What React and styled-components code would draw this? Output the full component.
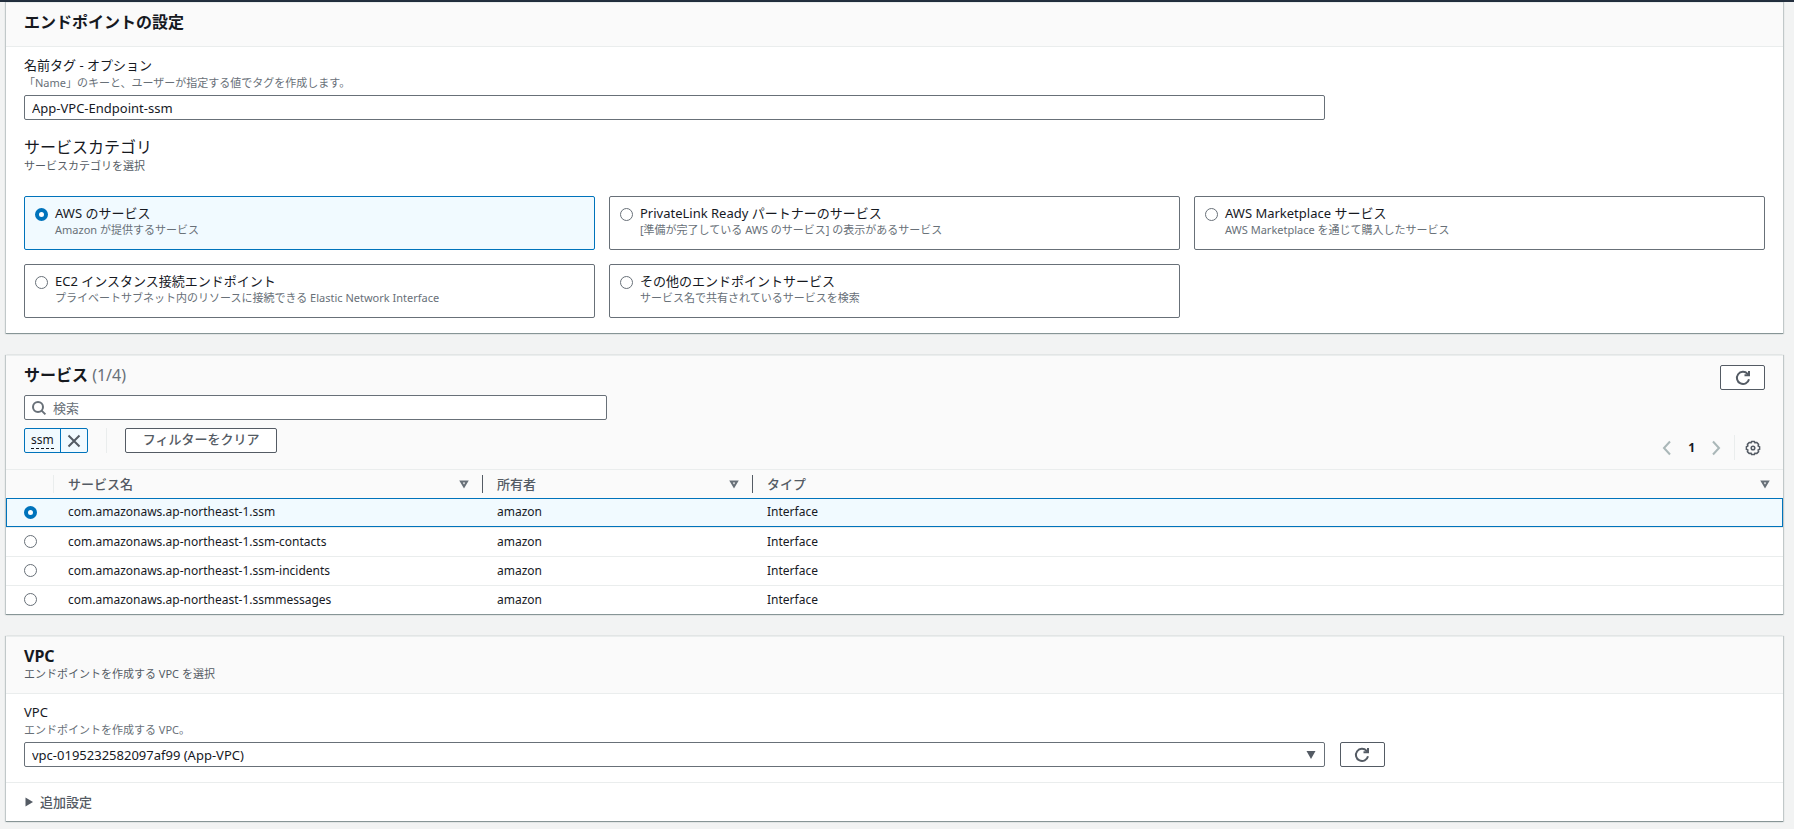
import { useState } from "react";
import styled, { createGlobalStyle } from "styled-components";

const CATEGORIES = [
  {
    id: "aws",
    title: "AWS のサービス",
    text: "Amazon が提供するサービス",
  },
  {
    id: "partner",
    title: "PrivateLink Ready パートナーのサービス",
    text: "[準備が完了している AWS のサービス] の表示があるサービス",
  },
  {
    id: "marketplace",
    title: "AWS Marketplace サービス",
    text: "AWS Marketplace を通じて購入したサービス",
  },
  {
    id: "ec2",
    title: "EC2 インスタンス接続エンドポイント",
    text: "プライベートサブネット内のリソースに接続できる Elastic Network Interface",
  },
  {
    id: "other",
    title: "その他のエンドポイントサービス",
    text: "サービス名で共有されているサービスを検索",
  },
];

const SERVICES = [
  "com.amazonaws.ap-northeast-1.ssm",
  "com.amazonaws.ap-northeast-1.ssm-contacts",
  "com.amazonaws.ap-northeast-1.ssm-incidents",
  "com.amazonaws.ap-northeast-1.ssmmessages",
];

const RefreshIcon = () => (
  <Icon viewBox="0 0 16 16">
    <path d="M14 9.2A6.1 6.1 0 1 1 12.6 3.8L14 5.2" />
    <path d="M14 1V5.2H9.5" />
  </Icon>
);

const SearchIcon = () => (
  <Icon viewBox="0 0 16 16">
    <circle cx="7" cy="7" r="5" />
    <path d="M10.6 10.6 14.4 14.4" />
  </Icon>
);

const CloseIcon = () => (
  <Icon viewBox="0 0 16 16">
    <path d="M2.5 2.5l11 11M13.5 2.5l-11 11" />
  </Icon>
);

const GearIcon = () => (
  <Icon viewBox="0 0 16 16" strokeLinejoin="round">
    <path
      d="M6.6 1.4H9.4L10 2.9 11.6 2.4 13.6 4.4 13.1 6 14.6 6.6V9.4L13.1 10 13.6 11.6 11.6 13.6 10 13.1 9.4 14.6H6.6L6 13.1 4.4 13.6 2.4 11.6 2.9 10 1.4 9.4V6.6L2.9 6 2.4 4.4 4.4 2.4 6 2.9Z"
    />
    <circle cx="8" cy="8" r="1.8" />
  </Icon>
);

const SortIcon = () => (
  <SmallIcon viewBox="0 0 10 10">
    <path d="M2 2.5h6L5 7.5Z" />
  </SmallIcon>
);

function EndpointSettings() {
  const [name, setName] = useState("App-VPC-Endpoint-ssm");
  const [category, setCategory] = useState("aws");

  return (
    <Panel>
      <PanelHeader>
        <Title>エンドポイントの設定</Title>
      </PanelHeader>
      <PanelBody>
        <Label htmlFor="name-tag">名前タグ - オプション</Label>
        <Hint>「Name」のキーと、ユーザーが指定する値でタグを作成します。</Hint>
        <TextInput
          id="name-tag"
          type="text"
          value={name}
          onChange={(e) => setName(e.target.value)}
        />
        <SubTitle>サービスカテゴリ</SubTitle>
        <Hint $dark>サービスカテゴリを選択</Hint>
        <CardGrid>
          {CATEGORIES.map((item) => (
            <Card key={item.id} $selected={category === item.id}>
              <Radio
                type="radio"
                name="category"
                checked={category === item.id}
                onChange={() => setCategory(item.id)}
              />
              <span>
                <CardTitle>{item.title}</CardTitle>
                <CardText>{item.text}</CardText>
              </span>
            </Card>
          ))}
        </CardGrid>
      </PanelBody>
    </Panel>
  );
}

function Services() {
  const [search, setSearch] = useState("");
  const [selected, setSelected] = useState(SERVICES[0]);

  return (
    <Panel>
      <TableHeader>
        <Row>
          <Title>
            サービス <Counter>(1/4)</Counter>
          </Title>
          <IconButton type="button" aria-label="更新">
            <RefreshIcon />
          </IconButton>
        </Row>
        <SearchBox>
          <SearchIcon />
          <input
            type="search"
            aria-label="検索"
            placeholder="検索"
            value={search}
            onChange={(e) => setSearch(e.target.value)}
          />
        </SearchBox>
        <Row>
          <Filters>
            <Token>
              <TokenLabel type="button">
                <span>ssm</span>
              </TokenLabel>
              <TokenClose type="button" aria-label="削除">
                <CloseIcon />
              </TokenClose>
            </Token>
            <Divider />
            <Button type="button">フィルターをクリア</Button>
          </Filters>
          <Pagination>
            <PageButton type="button" aria-label="前へ" $disabled>
              <Icon viewBox="0 0 16 16">
                <path d="M11 1.5 5 8l6 6.5" />
              </Icon>
            </PageButton>
            <PageNumber type="button">1</PageNumber>
            <PageButton type="button" aria-label="次へ" $disabled>
              <Icon viewBox="0 0 16 16">
                <path d="M5 1.5 11 8l-6 6.5" />
              </Icon>
            </PageButton>
            <Divider />
            <PageButton type="button" aria-label="設定">
              <GearIcon />
            </PageButton>
          </Pagination>
        </Row>
      </TableHeader>
      <Table>
        <colgroup>
          <Col $width={48} />
          <Col $width={429} />
          <Col $width={270} />
          <col />
        </colgroup>
        <thead>
          <tr>
            <th aria-label="選択">
              <HeadCell $light />
            </th>
            <th>
              <HeadCell>
                サービス名
                <SortIcon />
              </HeadCell>
            </th>
            <th>
              <HeadCell>
                所有者
                <SortIcon />
              </HeadCell>
            </th>
            <th>
              <HeadCell $last>
                タイプ
                <SortIcon />
              </HeadCell>
            </th>
          </tr>
        </thead>
        <tbody>
          {SERVICES.map((service) => (
            <ServiceRow key={service} $selected={selected === service}>
              <td>
                <Radio
                  type="radio"
                  name="service"
                  aria-label={service}
                  checked={selected === service}
                  onChange={() => setSelected(service)}
                />
              </td>
              <td>{service}</td>
              <td>amazon</td>
              <td>Interface</td>
            </ServiceRow>
          ))}
        </tbody>
      </Table>
    </Panel>
  );
}

function Vpc() {
  return (
    <Panel>
      <PanelHeader>
        <Title>VPC</Title>
        <Hint $dark>エンドポイントを作成する VPC を選択</Hint>
      </PanelHeader>
      <PanelBody>
        <Label htmlFor="vpc">VPC</Label>
        <Hint>エンドポイントを作成する VPC。</Hint>
        <SelectRow>
          <SelectBox>
            <select id="vpc" defaultValue="vpc-0195232582097af99">
              <option value="vpc-0195232582097af99">
                vpc-0195232582097af99 (App-VPC)
              </option>
            </select>
            <SmallIcon viewBox="0 0 10 10" $filled>
              <path d="M0.5 1h9L5 9Z" />
            </SmallIcon>
          </SelectBox>
          <IconButton type="button" aria-label="更新">
            <RefreshIcon />
          </IconButton>
        </SelectRow>
      </PanelBody>
      <Expander type="button" aria-expanded="false">
        <SmallIcon viewBox="0 0 10 10" $filled>
          <path d="M1.5 0.5v9L9 5Z" />
        </SmallIcon>
        追加設定
      </Expander>
    </Panel>
  );
}

function App() {
  return (
    <>
      <GlobalStyle />
      <Page>
        <EndpointSettings />
        <Services />
        <Vpc />
      </Page>
    </>
  );
}

export default App;

const GlobalStyle = createGlobalStyle`
  * {
    box-sizing: border-box;
  }
  body {
    margin: 0;
    background: #f2f3f3;
    color: #16191f;
    font-family: "Noto Sans", "Noto Sans CJK JP", sans-serif;
    font-size: 13px;
    line-height: 18px;
  }
  button,
  input,
  select {
    font: inherit;
    color: inherit;
  }
  button {
    cursor: pointer;
  }
`;

const Page = styled.main`
  display: flex;
  flex-direction: column;
  gap: 21px;
  padding: 0 11px 6px 6px;
  border-top: 2px solid #232f3e;
`;

const Panel = styled.section`
  background: #fff;
  border-top: 1px solid #eaeded;
  border-bottom: 1px solid #879596;
  box-shadow: 1px 0 1px 0 rgba(0, 28, 36, 0.2),
    -1px 0 1px 0 rgba(0, 28, 36, 0.2);
`;

const PanelHeader = styled.header`
  min-height: 44px;
  padding: 9px 18px 11px;
  background: #fafafa;
  border-bottom: 1px solid #eaeded;
`;

const PanelBody = styled.div`
  padding: 8px 18px 15px;
`;

const TableHeader = styled.header`
  display: flex;
  flex-direction: column;
  padding: 9px 18px;
  background: #fafafa;
  border-bottom: 1px solid #eaeded;
`;

const Title = styled.h2`
  margin: 0;
  font-size: 16px;
  font-weight: 700;
  line-height: 20px;
`;

const Counter = styled.span`
  color: #687078;
  font-weight: 400;
`;

const SubTitle = styled.h3`
  margin: 16px 0 0;
  font-size: 16px;
  font-weight: 400;
  line-height: 22px;
`;

const Label = styled.label`
  display: block;
  line-height: 20px;
`;

const Hint = styled.p`
  margin: 0;
  color: ${({ $dark }) => ($dark ? "#545b64" : "#687078")};
  font-size: 11px;
  line-height: 16px;
`;

const TextInput = styled.input`
  display: block;
  width: calc(75% - 5px);
  height: 25px;
  margin-top: 4px;
  padding: 0 7px;
  background: #fff;
  border: 1px solid #687078;
  border-radius: 2px;
`;

const CardGrid = styled.div`
  display: grid;
  grid-template-columns: repeat(3, 1fr);
  gap: 14px;
  margin-top: 22px;
`;

const Card = styled.label`
  display: flex;
  gap: 7px;
  min-height: 54px;
  padding: 7px 10px;
  background: ${({ $selected }) => ($selected ? "#f1faff" : "#fff")};
  border: 1px solid ${({ $selected }) => ($selected ? "#0073bb" : "#687078")};
  border-radius: 2px;
`;

const CardTitle = styled.span`
  display: block;
`;

const CardText = styled.span`
  display: block;
  color: #687078;
  font-size: 11px;
  line-height: 16px;
`;

const Radio = styled.input`
  appearance: none;
  flex: none;
  width: 13px;
  height: 13px;
  margin: 4px 0 0;
  background: #fff;
  border: 1px solid #687078;
  border-radius: 50%;
  &:checked {
    border: 4px solid #0073bb;
  }
`;

const Icon = styled.svg`
  display: block;
  flex: none;
  width: 16px;
  height: 16px;
  fill: none;
  stroke: currentColor;
  stroke-width: 2;
`;

const SmallIcon = styled.svg`
  display: block;
  flex: none;
  width: 10px;
  height: 10px;
  fill: ${({ $filled }) => ($filled ? "#545b64" : "none")};
  stroke: ${({ $filled }) => ($filled ? "none" : "#687078")};
  stroke-width: 2;
`;

const Row = styled.div`
  display: flex;
  align-items: flex-start;
  justify-content: space-between;
`;

const Button = styled.button`
  display: flex;
  align-items: center;
  justify-content: center;
  height: 25px;
  padding: 0 17px 3px;
  background: #fff;
  border: 1px solid #545b64;
  border-radius: 2px;
  color: #545b64;
  font-weight: 500;
`;

const IconButton = styled(Button)`
  width: 45px;
  padding: 0;
`;

const SearchBox = styled.div`
  display: flex;
  align-items: center;
  gap: 6px;
  width: calc(33% + 8px);
  height: 25px;
  margin: 5px 0 8px;
  padding: 0 6px;
  background: #fff;
  border: 1px solid #687078;
  border-radius: 2px;
  color: #687078;
  input {
    flex: 1;
    min-width: 0;
    padding: 0;
    background: none;
    border: 0;
    outline: 0;
    color: #16191f;
  }
  input::placeholder {
    color: #687078;
  }
`;

const Filters = styled.div`
  display: flex;
  align-items: center;
  gap: 18px;
`;

const Token = styled.div`
  display: flex;
  height: 25px;
  background: #f1faff;
  border: 1px solid #0073bb;
  border-radius: 2px;
`;

const TokenLabel = styled.button`
  padding: 0 6px;
  background: none;
  border: 0;
  font-size: 12px;
  line-height: 16px;
  span {
    display: block;
    border-bottom: 1px dashed #16191f;
  }
`;

const TokenClose = styled.button`
  padding: 0 5px;
  background: none;
  border: 0;
  border-left: 1px solid #0073bb;
  color: #545b64;
`;

const Divider = styled.span`
  width: 1px;
  height: 25px;
  background: #eaeded;
`;

const Pagination = styled.div`
  display: flex;
  align-items: center;
  gap: 10px;
  padding: 7px 4px 0 0;
`;

const PageButton = styled.button`
  padding: 0;
  background: none;
  border: 0;
  color: ${({ $disabled }) => ($disabled ? "#aab7b8" : "#545b64")};
  ${Icon} {
    stroke-width: ${({ $disabled }) => ($disabled ? 2 : 1.5)};
  }
`;

const PageNumber = styled.button`
  padding: 0 3px;
  background: none;
  border: 0;
  font-size: 12px;
  font-weight: 700;
`;

const Table = styled.table`
  width: 100%;
  table-layout: fixed;
  border-collapse: collapse;
  th {
    height: 28px;
    padding: 0;
    background: #fafafa;
    color: #545b64;
    font-weight: 500;
    text-align: left;
  }
`;

const Col = styled.col`
  width: ${({ $width }) => $width}px;
`;

const HeadCell = styled.div`
  display: flex;
  align-items: center;
  justify-content: space-between;
  height: 18px;
  padding: 0 13px 0 14px;
  border-right: ${({ $last, $light }) =>
    $last ? "0" : `1px solid ${$light ? "#eaeded" : "#545b64"}`};
`;

const ServiceRow = styled.tr`
  background: ${({ $selected }) => ($selected ? "#f1faff" : "#fff")};
  outline: ${({ $selected }) => ($selected ? "1px solid #0073bb" : "none")};
  outline-offset: -1px;
  & + & {
    border-top: 1px solid #eaeded;
  }
  td {
    height: 29px;
    padding: 0 14px;
    font-size: 12px;
  }
  td:first-child {
    padding: 0 18px;
  }
  ${Radio} {
    display: block;
    margin: 0;
  }
`;

const SelectRow = styled.div`
  display: flex;
  gap: 15px;
  margin-top: 4px;
`;

const SelectBox = styled.div`
  display: grid;
  align-items: center;
  width: calc(75% - 5px);
  select,
  svg {
    grid-area: 1 / 1;
  }
  select {
    appearance: none;
    width: 100%;
    height: 25px;
    padding: 0 7px;
    background: #fff;
    border: 1px solid #687078;
    border-radius: 2px;
  }
  svg {
    justify-self: end;
    margin-right: 9px;
    pointer-events: none;
  }
`;

const Expander = styled.button`
  display: flex;
  align-items: center;
  gap: 6px;
  width: 100%;
  padding: 10px 18px;
  background: none;
  border: 0;
  border-top: 1px solid #eaeded;
  color: #545b64;
  font-weight: 500;
`;
